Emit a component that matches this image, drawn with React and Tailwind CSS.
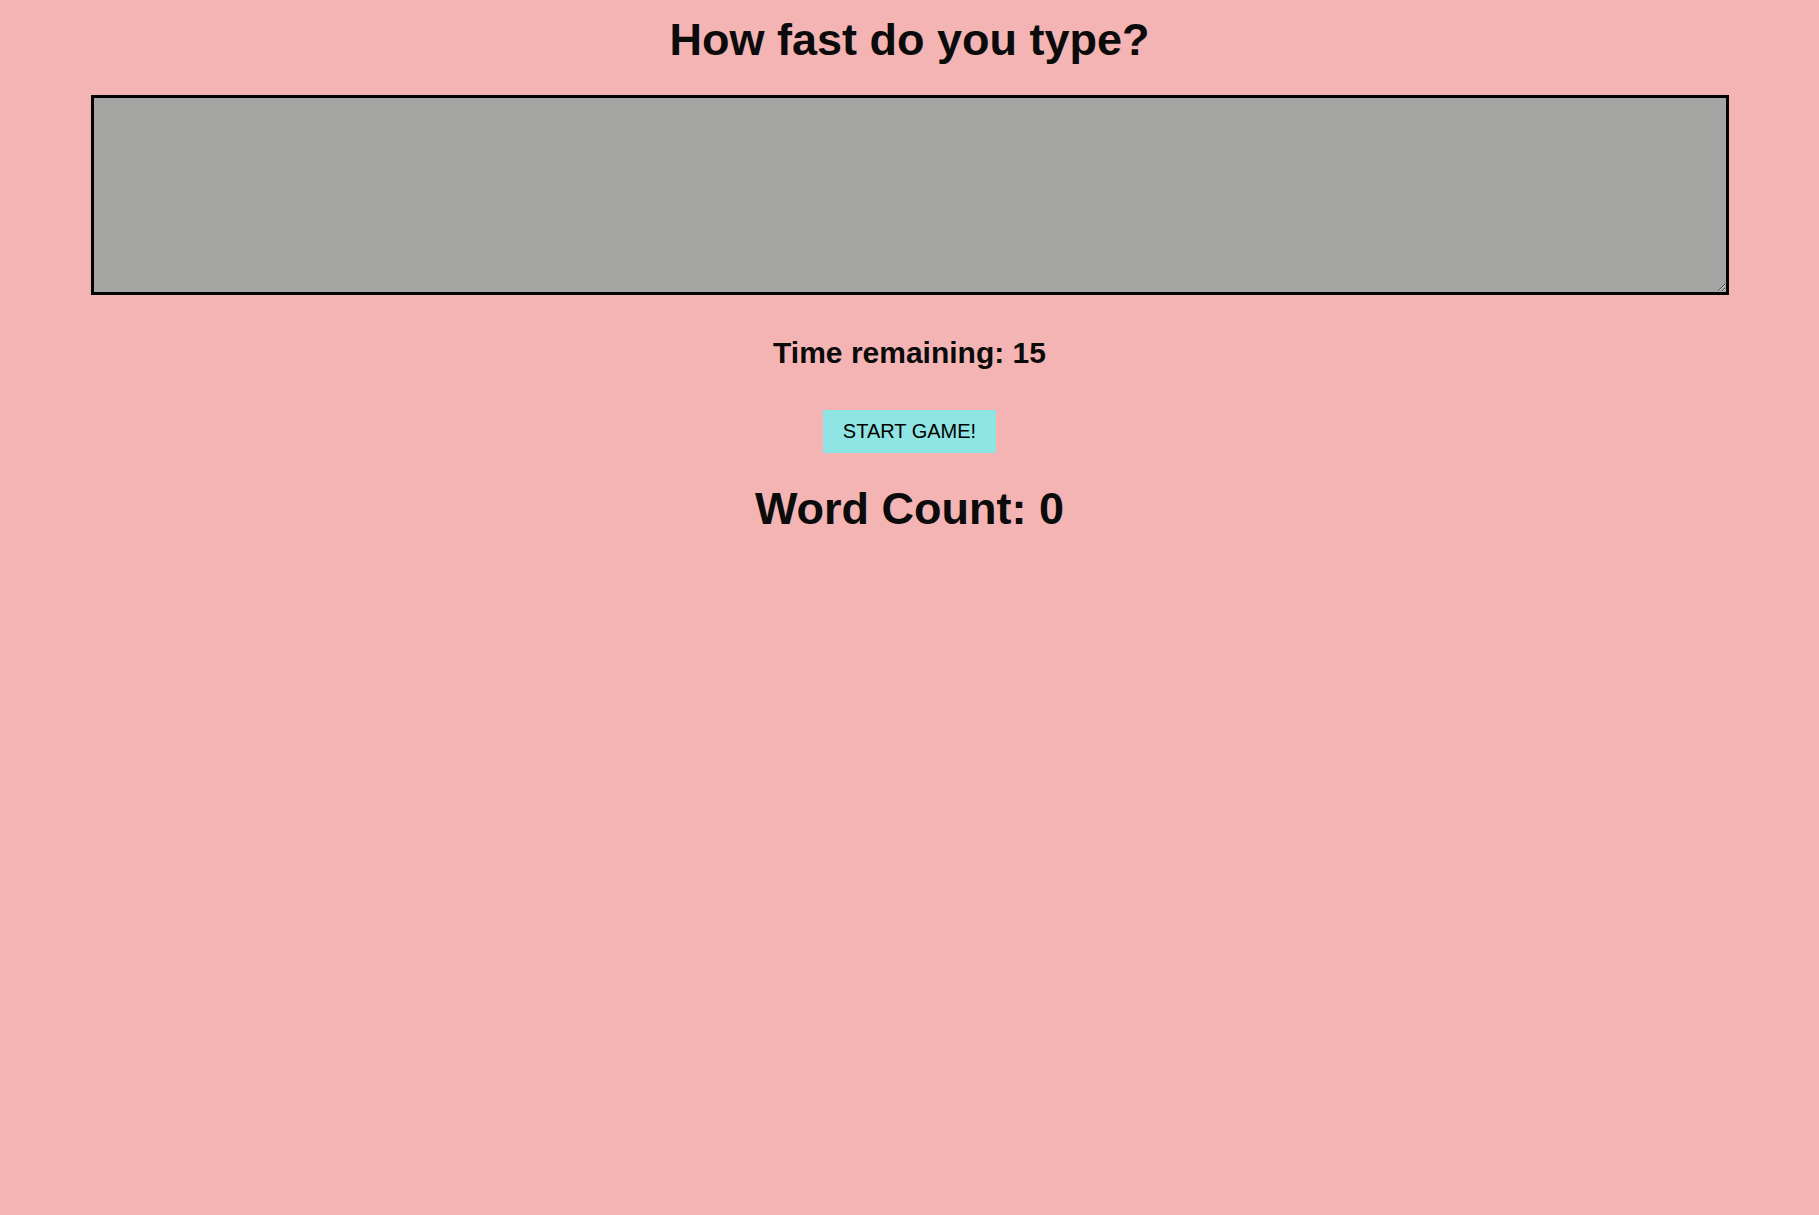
import React from "react";

export default function App() {
  return (
    <div
      className="min-h-[1215px] w-full bg-[#f4b4b4] flex flex-col items-center text-[#0b0b0b]"
      style={{ fontFamily: '"Liberation Sans", Arial, Helvetica, sans-serif' }}
    >
      <h1 className="mt-[14px] text-[45px] leading-[52px] font-bold">How fast do you type?</h1>
      <textarea className="mt-[29px] w-[1638px] h-[200px] border-[3px] border-black bg-[#a4a4a2] outline-none" />
      <h4 className="mt-[40px] text-[30px] leading-[36px] font-bold">Time remaining: 15</h4>
      <button className="mt-[39px] bg-[#8fe4e4] px-[20px] py-[10px] text-[20px] leading-[23px] text-black">
        START GAME!
      </button>
      <h1 className="mt-[30px] text-[45px] leading-[52px] font-bold">Word Count: 0</h1>
    </div>
  );
}
